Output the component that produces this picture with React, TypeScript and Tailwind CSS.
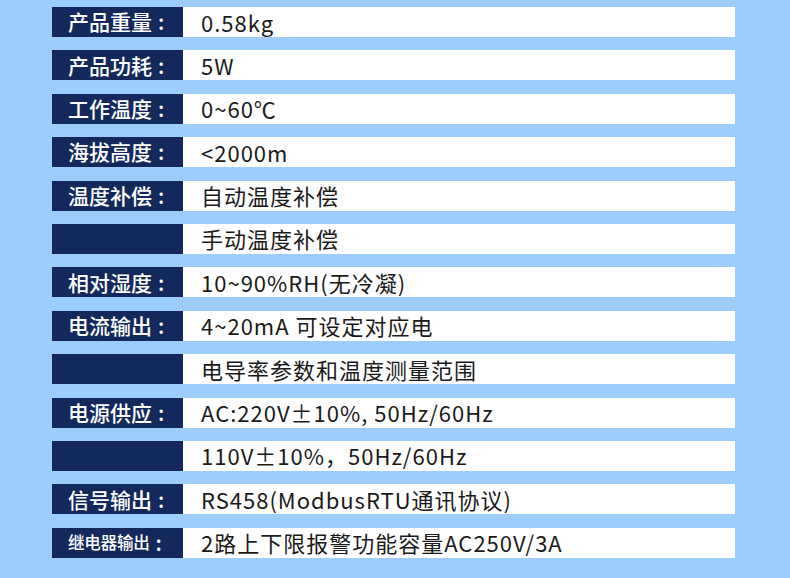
const rows: [string, string, boolean?][] = [
  ["产品重量", "0.58kg"],
  ["产品功耗", "5W"],
  ["工作温度", "0~60℃"],
  ["海拔高度", "<2000m"],
  ["温度补偿", "自动温度补偿"],
  ["", "手动温度补偿"],
  ["相对湿度", "10~90%RH(无冷凝)"],
  ["电流输出", "4~20mA 可设定对应电"],
  ["", "电导率参数和温度测量范围"],
  ["电源供应", "AC:220V±10%, 50Hz/60Hz"],
  ["", "110V±10%，50Hz/60Hz"],
  ["信号输出", "RS458(ModbusRTU通讯协议)"],
  ["继电器输出", "2路上下限报警功能容量AC250V/3A", true],
];

export default function App() {
  return (
    <div
      className="w-[790px] h-[578px] bg-[#9dcefb] pt-[7px] pl-[52px] flex flex-col gap-[13.4px] overflow-hidden"
      style={{ fontFamily: '"Noto Sans CJK SC", "Noto Sans", sans-serif' }}
    >
      {rows.map(([label, value, small], i) => (
        <div key={i} className="flex h-[30px] w-[683px]">
          <div
            className={
              "w-[131px] shrink-0 bg-[#13295c] text-white flex items-center pl-[16px] font-medium whitespace-nowrap " +
              (small ? "text-[16.6px] tracking-[-0.3px]" : "text-[21px]")
            }
          >
            {label && (
              <>
                {label}
                <span className="ml-[6px] text-[21px]">:</span>
              </>
            )}
          </div>
          <div className="flex-1 bg-white text-[#1a1a1a] flex items-center pl-[18px] text-[22px] tracking-[1px] whitespace-nowrap">
            {value}
          </div>
        </div>
      ))}
    </div>
  );
}
